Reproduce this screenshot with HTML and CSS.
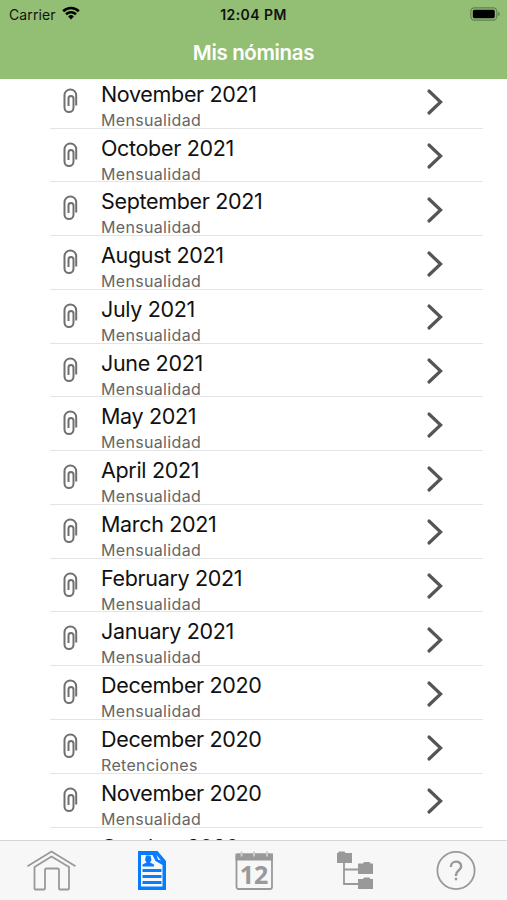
FILE: index.html
```html
<!DOCTYPE html>
<html lang="es">
<head>
    <meta charset="UTF-8">
    <meta name="viewport" content="width=device-width, initial-scale=1.0">
    <title>Mis nóminas</title>
    <link rel="stylesheet" href="styles.css">
</head>
<body>
    <!-- Shared row icons -->
    <svg class="hidden">
        <symbol id="clip" viewBox="0 0 16 28">
            <path d="M14.200 18.500V8.300a5.850 5.850 0 0 0-11.700 0v12.200a4.500 4.500 0 0 0 9 0v-9a2.500 2.500 0 0 0-5 0v7.500"/>
        </symbol>
        <symbol id="arrow" viewBox="0 0 18 28">
            <path d="M3 3l11.6 11L3 25"/>
        </symbol>
    </svg>

    <header class="header">
        <div class="status-bar">
            <div class="carrier">
                Carrier
                <svg class="wifi" viewBox="0 0 18 14">
                    <path d="M1.2 5.2a11.2 11.2 0 0 1 15.6 0M4 8.3a7.2 7.2 0 0 1 10 0"/>
                    <path class="dot" d="M9 13.4L6.1 10.5a4.2 4.2 0 0 1 5.8 0z"/>
                </svg>
            </div>
            <div class="time">12:04 PM</div>
            <svg class="battery" viewBox="0 0 31 14">
                <rect class="shell" x=".8" y=".8" width="26" height="12.4" rx="3.6"/>
                <rect x="2.8" y="2.8" width="22" height="8.4" rx="1.6"/>
                <path class="cap" d="M28.2 4.8c2.2.8 2.2 3.6 0 4.4z"/>
            </svg>
        </div>
        <h1>Mis nóminas</h1>
    </header>

    <main class="content">
        <ul class="list">
            <li class="row">
                <svg class="clip"><use href="#clip"/></svg>
                <div class="text"><div class="month">November 2021</div><div class="type">Mensualidad</div></div>
                <svg class="arrow"><use href="#arrow"/></svg>
            </li>
            <li class="row">
                <svg class="clip"><use href="#clip"/></svg>
                <div class="text"><div class="month">October 2021</div><div class="type">Mensualidad</div></div>
                <svg class="arrow"><use href="#arrow"/></svg>
            </li>
            <li class="row">
                <svg class="clip"><use href="#clip"/></svg>
                <div class="text"><div class="month">September 2021</div><div class="type">Mensualidad</div></div>
                <svg class="arrow"><use href="#arrow"/></svg>
            </li>
            <li class="row">
                <svg class="clip"><use href="#clip"/></svg>
                <div class="text"><div class="month">August 2021</div><div class="type">Mensualidad</div></div>
                <svg class="arrow"><use href="#arrow"/></svg>
            </li>
            <li class="row">
                <svg class="clip"><use href="#clip"/></svg>
                <div class="text"><div class="month">July 2021</div><div class="type">Mensualidad</div></div>
                <svg class="arrow"><use href="#arrow"/></svg>
            </li>
            <li class="row">
                <svg class="clip"><use href="#clip"/></svg>
                <div class="text"><div class="month">June 2021</div><div class="type">Mensualidad</div></div>
                <svg class="arrow"><use href="#arrow"/></svg>
            </li>
            <li class="row">
                <svg class="clip"><use href="#clip"/></svg>
                <div class="text"><div class="month">May 2021</div><div class="type">Mensualidad</div></div>
                <svg class="arrow"><use href="#arrow"/></svg>
            </li>
            <li class="row">
                <svg class="clip"><use href="#clip"/></svg>
                <div class="text"><div class="month">April 2021</div><div class="type">Mensualidad</div></div>
                <svg class="arrow"><use href="#arrow"/></svg>
            </li>
            <li class="row">
                <svg class="clip"><use href="#clip"/></svg>
                <div class="text"><div class="month">March 2021</div><div class="type">Mensualidad</div></div>
                <svg class="arrow"><use href="#arrow"/></svg>
            </li>
            <li class="row">
                <svg class="clip"><use href="#clip"/></svg>
                <div class="text"><div class="month">February 2021</div><div class="type">Mensualidad</div></div>
                <svg class="arrow"><use href="#arrow"/></svg>
            </li>
            <li class="row">
                <svg class="clip"><use href="#clip"/></svg>
                <div class="text"><div class="month">January 2021</div><div class="type">Mensualidad</div></div>
                <svg class="arrow"><use href="#arrow"/></svg>
            </li>
            <li class="row">
                <svg class="clip"><use href="#clip"/></svg>
                <div class="text"><div class="month">December 2020</div><div class="type">Mensualidad</div></div>
                <svg class="arrow"><use href="#arrow"/></svg>
            </li>
            <li class="row">
                <svg class="clip"><use href="#clip"/></svg>
                <div class="text"><div class="month">December 2020</div><div class="type">Retenciones</div></div>
                <svg class="arrow"><use href="#arrow"/></svg>
            </li>
            <li class="row">
                <svg class="clip"><use href="#clip"/></svg>
                <div class="text"><div class="month">November 2020</div><div class="type">Mensualidad</div></div>
                <svg class="arrow"><use href="#arrow"/></svg>
            </li>
            <li class="row">
                <svg class="clip"><use href="#clip"/></svg>
                <div class="text"><div class="month">October 2020</div></div>
                <svg class="arrow"><use href="#arrow"/></svg>
            </li>
        </ul>
    </main>

    <nav class="tabs">
        <a class="tab">
            <svg viewBox="0 0 50 44" class="line">
                <path d="M1.5 16.2L25.500 1.500l24 14.700"/>
                <path d="M8.500 17V38.500q0 1 1 1H18q1 0 1-1V20q0-1.500 1.500-1.500h11q1.500 0 1.500 1.500v18.500q0 1 1 1h8q1 0 1-1V17L25.500 6.500z"/>
            </svg>
        </a>
        <a class="tab active">
            <svg viewBox="0 0 50 44">
                <path class="fill" d="M11 1h19.500l8.500 10v29H11z"/>
                <path class="paper" d="M14 5h11.500l3 6 7 4V36.500H14z"/>
                <path class="fill" d="M15.500 16.500v-2l4-2-1.500-2.500 1-4.500h4.500l1 4.500-1.500 2.500 4 2v2zM15.500 19h19v3h-19zM15.500 25h19v3h-19zM15.500 31h19v3h-19z"/>
                <path class="paper" d="M29.500 5l4.500 5.500-3-1z"/>
            </svg>
        </a>
        <a class="tab">
            <svg viewBox="0 0 50 44">
                <rect class="frame" x="7.500" y="4.500" width="35.500" height="34.500" rx="2"/>
                <path class="fill" d="M6.500 3.500H44v7H6.500z"/>
                <path class="rings" d="M12.500 1.500v5M25 1.500v5M38 1.500v5"/>
                <text class="day" x="25" y="34" text-anchor="middle">12</text>
            </svg>
        </a>
        <a class="tab">
            <svg viewBox="0 0 50 44">
                <path class="line" d="M14 12v22h15M14 19.500h15"/>
                <path class="fill" d="M7 3h1l1-1.500h5.500L15.500 3H22v10H7zM28 13.500h5l1-1.500h5.500l1 1.500H43V24H28zM28 29h5l1-1.500h5.500l1 1.500H43v10H28z"/>
            </svg>
        </a>
        <a class="tab">
            <svg viewBox="0 0 50 44" class="line">
                <circle cx="25" cy="20.500" r="18.600"/>
                <path class="mark" d="M19.800 17c0-7 10.400-7 10.400-.8 0 4-5.200 4.600-5.200 8.800v1M25 27.800v2.500"/>
            </svg>
        </a>
    </nav>
</body>
</html>
```
FILE: styles.css
```css
* {
    box-sizing: border-box;
}
body {
    margin: 0;
    height: 900px;
    display: flex;
    flex-direction: column;
    overflow: hidden;
    background-color: #fff;
    font-family: Inter, "Liberation Sans", sans-serif;
}
.hidden {
    position: absolute;
    width: 0;
    height: 0;
}

/* Header */
.header {
    flex: none;
    height: 79px;
    background-color: #93bf74;
}
.status-bar {
    display: grid;
    grid-template-columns: 1fr auto 1fr;
    align-items: center;
    height: 28px;
    padding: 0 6px 0 9px;
    font-size: 14px;
    color: #111;
}
.carrier {
    display: flex;
    align-items: center;
    gap: 6px;
    letter-spacing: 0.1px;
}
.wifi {
    width: 18px;
    height: 14px;
    margin-top: -2px;
    fill: none;
    stroke: #000;
    stroke-width: 2.6;
}
.wifi .dot {
    fill: #000;
    stroke: none;
}
.time {
    font-weight: 600;
    letter-spacing: 0.45px;
    margin-right: 3px;
}
.battery {
    justify-self: end;
    width: 31px;
    height: 14px;
    margin-top: -1px;
}
.battery .shell {
    fill: none;
    stroke: #638050;
    stroke-width: 1.2;
}
.battery .cap {
    fill: #638050;
}
h1 {
    margin: 0;
    font-size: 20.5px;
    font-weight: 600;
    line-height: 49px;
    letter-spacing: -0.35px;
    text-align: center;
    color: #fff;
}

/* Payslip list, scrolled slightly under the header */
.content {
    flex: 1;
    min-height: 0;
    overflow: hidden;
}
.list {
    list-style: none;
    margin: -4.2px 24px 0 50px;
    padding: 0;
}
.row {
    display: flex;
    height: 53.77px;
    border-bottom: 1px solid #e3e4e5;
}
.clip {
    width: 16px;
    height: 28px;
    margin: 12px 0 0 12px;
    fill: none;
    stroke: #707070;
    stroke-width: 2;
}
.text {
    flex: 1;
    margin-left: 23px;
}
.month {
    padding-top: 6px;
    font-size: 21.5px;
    line-height: 27px;
    letter-spacing: -0.33px;
    color: #111;
}
.type {
    font-size: 16px;
    line-height: 25px;
    letter-spacing: 0.33px;
    color: #666;
}
.arrow {
    width: 18px;
    height: 28px;
    margin: 13.5px 39px 0 0;
    fill: none;
    stroke: #555;
    stroke-width: 3.2;
    stroke-linecap: round;
}

/* Bottom tabs */
.tabs {
    flex: none;
    display: flex;
    height: 60px;
    padding-top: 9px;
    border-top: 1px solid #d6d6d6;
    background-color: #f7f7f7;
}
.tab {
    flex: 1;
    text-align: center;
    color: #999;
}
.tab.active {
    color: #087cff;
}
.tab svg {
    width: 50px;
    height: 44px;
}
.fill {
    fill: currentColor;
}
.paper {
    fill: #f7f7f7;
}
.line,
.frame {
    fill: none;
    stroke: currentColor;
    stroke-width: 1.8;
}
.mark {
    stroke-width: 2.4;
}
.rings {
    stroke: #ccc;
    stroke-width: 2;
}
.day {
    font: bold 25px "Open Sans", sans-serif;
    fill: currentColor;
}
```
